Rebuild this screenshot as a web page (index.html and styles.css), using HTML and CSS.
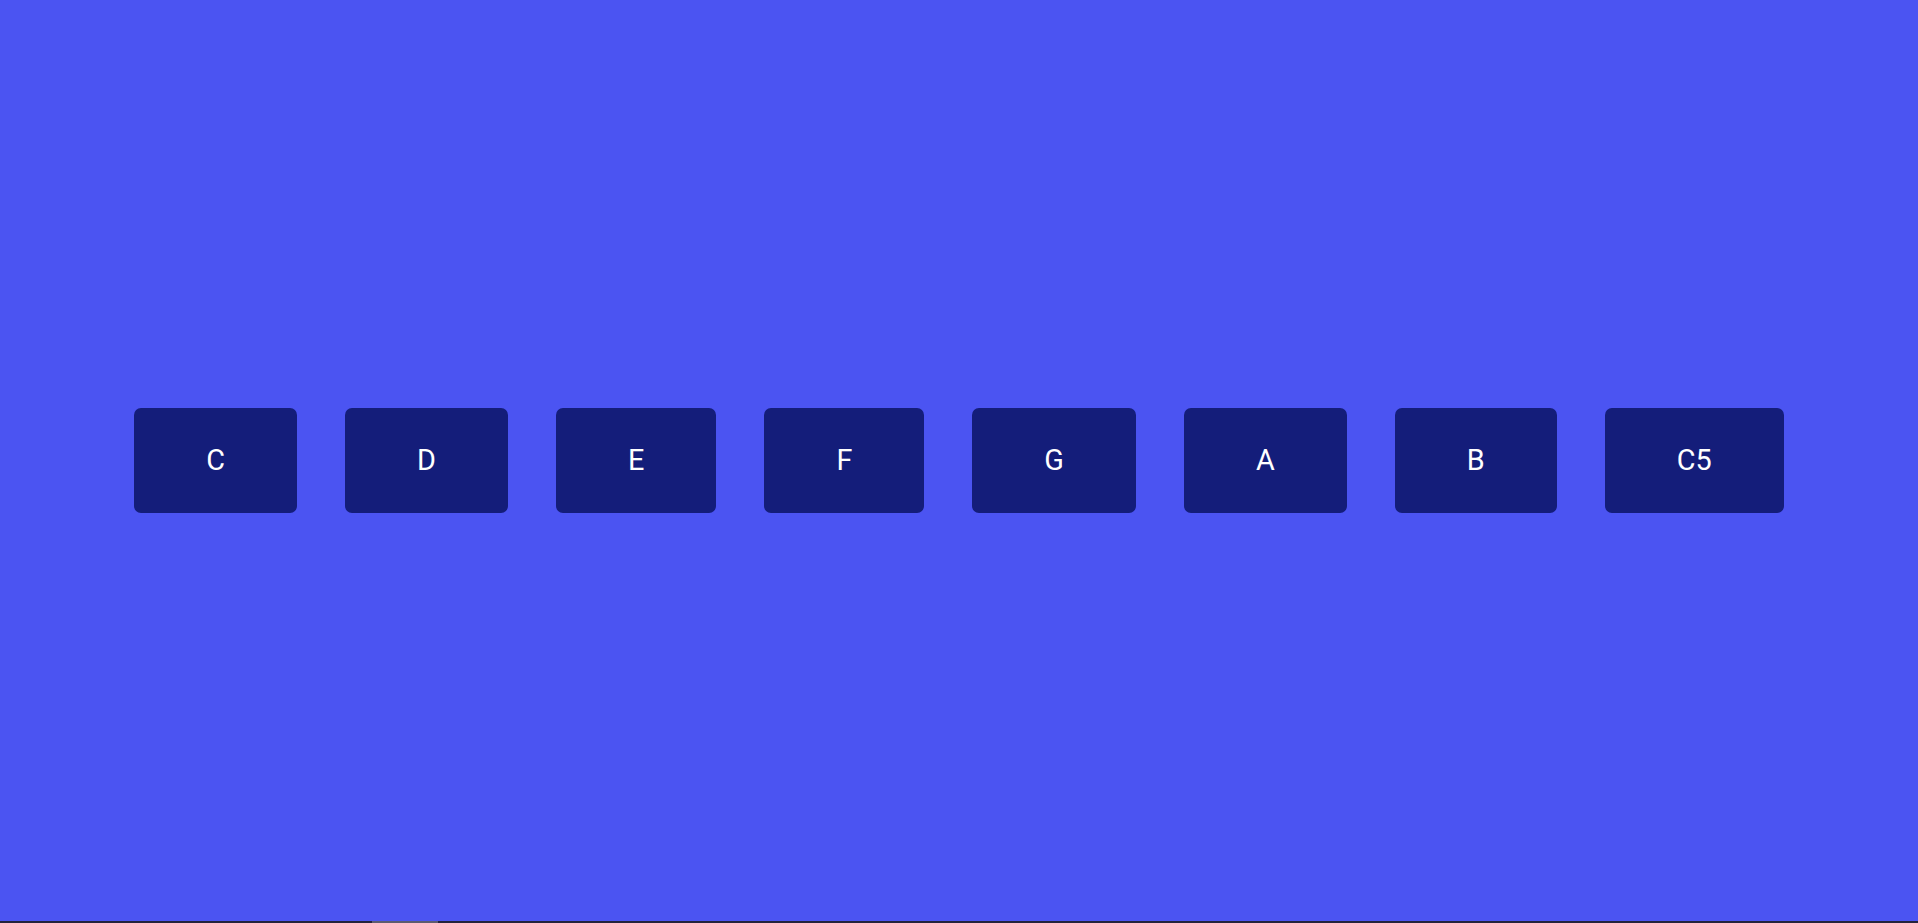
FILE: index.html
```html
<!DOCTYPE html>
<html lang="en">
<head>
<meta charset="utf-8">
<title>Notes</title>
<link rel="stylesheet" href="styles.css">
</head>
<body>
<main class="stage">
  <div class="keys">
    <button class="key">C</button>
    <button class="key">D</button>
    <button class="key">E</button>
    <button class="key">F</button>
    <button class="key">G</button>
    <button class="key">A</button>
    <button class="key">B</button>
    <button class="key">C5</button>
  </div>
</main>
<div class="scrollbar"><div class="thumb"></div></div>
</body>
</html>
```
FILE: styles.css
```css
html, body {
  margin: 0;
  padding: 0;
  height: 100%;
}
body {
  background: #4b54f2;
  font-family: Roboto, "Liberation Sans", sans-serif;
  display: flex;
  flex-direction: column;
  overflow: hidden;
}
.stage {
  flex: 1;
  display: flex;
  align-items: center;
  justify-content: center;
}
.keys {
  display: flex;
  gap: 48px;
}
.key {
  background: #141d7a;
  color: #ffffff;
  border: none;
  border-radius: 7px;
  font-family: Roboto, "Liberation Sans", sans-serif;
  font-size: 28.8px;
  line-height: 33.5px;
  padding: 36px 72px;
  cursor: pointer;
}
.scrollbar {
  height: 2px;
  background: #23233d;
  flex: none;
  padding-left: 372px;
}
.thumb {
  width: 66px;
  height: 2px;
  background: #5c5c70;
}
```
